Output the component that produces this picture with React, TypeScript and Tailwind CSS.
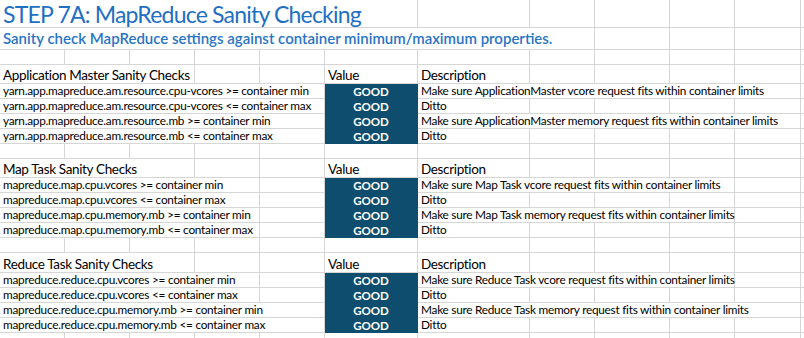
import React from "react";

const FONT = "font-['Lato','Liberation_Sans',sans-serif]";

const SPAN: Record<number, string> = {
  1: "col-span-1",
  2: "col-span-2",
  3: "col-span-3",
  4: "col-span-4",
  5: "col-span-5",
  6: "col-span-6",
  7: "col-span-7",
  8: "col-span-8",
};

type Cell = { span?: number; text?: string; kind?: "good" | "head" | "body" | "title" | "sub" };

const HEIGHT: Record<string, string> = {
  title: "h-[28px]",
  sub: "h-[22px]",
  blank: "h-[15px]",
  head: "h-[19px]",
  head20: "h-[20px]",
  data: "h-[15px]",
  rest: "h-[10px]",
};

function Row({ height, cells }: { height: string; cells: Cell[] }) {
  const used = cells.reduce((n, c) => n + (c.span ?? 1), 0);
  const filler: Cell[] = Array.from({ length: Math.max(0, 12 - used) }, () => ({}));
  return (
    <>
      {[...cells, ...filler].map((c, i) => {
        const base = `${SPAN[c.span ?? 1]} ${HEIGHT[height]} flex items-end whitespace-nowrap overflow-visible px-[3px]`;
        if (c.kind === "good") {
          return (
            <div
              key={i}
              className={`${base} justify-center border-r border-b border-[#0f4d6e] bg-[#0f4d6e] pb-[1px] text-[11.5px] font-bold leading-none text-white`}
            >
              {c.text}
            </div>
          );
        }
        const tone =
          c.kind === "title"
            ? "text-[23px] leading-none text-[#1f6fc4] tracking-[-0.8px] pb-[1px]"
            : c.kind === "sub"
              ? "text-[15px] leading-none font-semibold text-[#2a74c6] pb-[3px]"
              : c.kind === "head"
                ? "text-[13.5px] leading-none text-black tracking-[-0.35px] pb-[0.5px]"
                : "text-[11.8px] leading-none text-black tracking-[-0.25px] pb-[1px]";
        return (
          <div key={i} className={`${base} border-r border-b border-[#d6d6d6] ${tone}`}>
            {c.text}
          </div>
        );
      })}
    </>
  );
}

const sections = [
  {
    title: "Application Master Sanity Checks",
    headHeight: "head",
    rows: [
      ["yarn.app.mapreduce.am.resource.cpu-vcores >= container min", 5, "Make sure ApplicationMaster vcore request fits within container limits", 5],
      ["yarn.app.mapreduce.am.resource.cpu-vcores <= container max", 5, "Ditto", 1],
      ["yarn.app.mapreduce.am.resource.mb >= container min", 5, "Make sure ApplicationMaster memory request fits within container limits", 5],
      ["yarn.app.mapreduce.am.resource.mb <= container max", 5, "Ditto", 1],
    ],
  },
  {
    title: "Map Task Sanity Checks",
    headHeight: "head",
    rows: [
      ["mapreduce.map.cpu.vcores >= container min", 4, "Make sure Map Task vcore request fits within container limits", 4],
      ["mapreduce.map.cpu.vcores <= container max", 4, "Ditto", 1],
      ["mapreduce.map.cpu.memory.mb >= container min", 4, "Make sure Map Task memory request fits within container limits", 4],
      ["mapreduce.map.cpu.memory.mb <= container max", 4, "Ditto", 1],
    ],
  },
  {
    title: "Reduce Task Sanity Checks",
    headHeight: "head20",
    rows: [
      ["mapreduce.reduce.cpu.vcores >= container min", 4, "Make sure Reduce Task vcore request fits within container limits", 4],
      ["mapreduce.reduce.cpu.vcores <= container max", 4, "Ditto", 1],
      ["mapreduce.reduce.cpu.memory.mb >= container min", 5, "Make sure Reduce Task memory request fits within container limits", 5],
      ["mapreduce.reduce.cpu.memory.mb <= container max", 5, "Ditto", 1],
    ],
  },
] as const;

function pad(label: string, span: number): Cell[] {
  // label spills over `span` of columns A..E, the rest stay empty
  const cells: Cell[] = [{ span, text: label, kind: "body" }];
  for (let i = span; i < 5; i++) cells.push({});
  return cells;
}

export default function App() {
  return (
    <div className={`${FONT} h-[338px] w-[804px] overflow-hidden bg-white`}>
      <div className="grid grid-cols-[65px_65px_65px_65px_65px_93px_112px_65px_75px_65px_66px_1fr]">
        <Row height="title" cells={[{ span: 6, text: "STEP 7A: MapReduce Sanity Checking", kind: "title" }]} />
        <Row
          height="sub"
          cells={[
            {
              span: 8,
              text: "Sanity check MapReduce settings against container minimum/maximum properties.",
              kind: "sub",
            },
          ]}
        />
        {sections.map((s, si) => (
          <React.Fragment key={s.title}>
            <Row height="blank" cells={[]} />
            <Row
              height={s.headHeight}
              cells={[
                { span: 3, text: s.title, kind: "head" },
                {},
                {},
                { text: "Value", kind: "head" },
                { text: "Description", kind: "head" },
              ]}
            />
            {s.rows.map(([label, span, desc, dspan]) => (
              <Row
                key={label + si}
                height="data"
                cells={[...pad(label, span), { text: "GOOD", kind: "good" }, { span: dspan, text: desc, kind: "body" }]}
              />
            ))}
          </React.Fragment>
        ))}
        <Row height="rest" cells={[]} />
      </div>
    </div>
  );
}
